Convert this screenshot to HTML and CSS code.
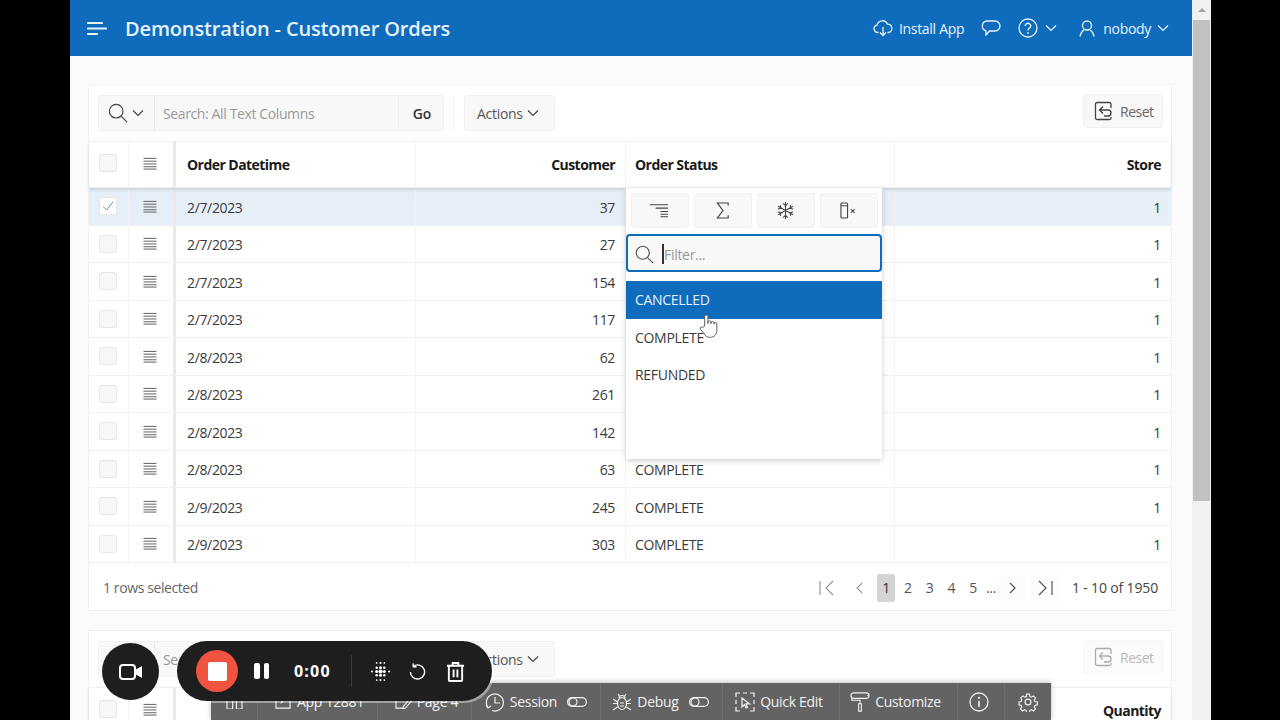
FILE: index.html
```html
<!DOCTYPE html>
<html lang="en">
<head>
<meta charset="utf-8">
<title>Demonstration - Customer Orders</title>
<link rel="stylesheet" href="styles.css">
</head>
<body>
<svg class="defs" width="0" height="0" aria-hidden="true">
  <symbol id="lines" viewBox="0 0 16 14"><path d="M1 1.500h14M1 4.500h14M1 7.500h14M1 10.500h14M1 13h14" fill="none" stroke="currentColor" stroke-width="1"/></symbol>
  <symbol id="chev" viewBox="0 0 12 8"><path d="M1 1.500l5 5 5-5" fill="none" stroke="currentColor" stroke-width="1.200"/></symbol>
  <symbol id="mag" viewBox="0 0 22 22"><circle cx="9" cy="9" r="7.500" fill="none" stroke="currentColor" stroke-width="1.300"/><path d="M14.500 14.500l6.500 6.500" fill="none" stroke="currentColor" stroke-width="1.300"/></symbol>
  <symbol id="reset" viewBox="0 0 20 20"><path d="M17 7V3a1.500 1.500 0 0 0-1.500-1.500H3A1.500 1.500 0 0 0 1.500 3v14A1.500 1.500 0 0 0 3 18.500h12.500A1.500 1.500 0 0 0 17 17v-1M9 5.500L5.500 9 9 12.500M5.500 9H14a3 3 0 0 1 0 6H10" fill="none" stroke="currentColor" stroke-width="1.300"/></symbol>
</svg>
<div class="app">
  <div class="page">
    <header class="topbar">
      <svg class="burger" viewBox="0 0 20 15"><path d="M1 2h14M1 7.500h18M1 13h9" fill="none" stroke="currentColor" stroke-width="2.200" stroke-linecap="round"/></svg>
      <h1 class="title">Demonstration - Customer Orders</h1>
      <div class="topnav">
        <svg class="ico-cloud" viewBox="0 0 20 18"><path d="M5.500 13.500H4.500a3.700 3.700 0 0 1-.5-7.300 5.500 5.500 0 0 1 10.500-1 4.200 4.200 0 0 1 1 8.300h-1M10 8v8.500M7 13.500l3 3 3-3" fill="none" stroke="currentColor" stroke-width="1.300"/></svg>
        <span class="nav-text install">Install App</span>
        <svg class="ico-chat" viewBox="0 0 20 16"><path d="M6 1h8a5 5 0 0 1 0 10H8.500L5 15v-4.200A5 5 0 0 1 6 1z" fill="none" stroke="currentColor" stroke-width="1.300"/></svg>
        <svg class="ico-help" viewBox="0 0 20 20"><circle cx="10" cy="10" r="9" fill="none" stroke="currentColor" stroke-width="1.300"/><path d="M7.300 8a2.700 2.700 0 1 1 4.200 2.200c-1 .7-1.500 1.100-1.500 2.300" fill="none" stroke="currentColor" stroke-width="1.400"/><circle cx="10" cy="15" r=".9" fill="currentColor"/></svg>
        <svg class="ico-chev help-chev"><use href="#chev"/></svg>
        <svg class="ico-user" viewBox="0 0 16 17"><circle cx="8" cy="5.500" r="4.500" fill="none" stroke="currentColor" stroke-width="1.300"/><path d="M1 16.500c.5-3 1.500-5 4-6.500M15 16.500c-.5-3-1.500-5-4-6.500" fill="none" stroke="currentColor" stroke-width="1.300"/></svg>
        <span class="nav-text user">nobody</span>
        <svg class="ico-chev"><use href="#chev"/></svg>
      </div>
    </header>

    <main class="content">
      <section class="card">
        <div class="toolbar">
          <div class="searchgroup">
            <div class="search-ico"><svg class="mag"><use href="#mag"/></svg><svg class="ico-chev dark"><use href="#chev"/></svg></div>
            <div class="search-input">Search: All Text Columns</div>
            <div class="go">Go</div>
          </div>
          <div class="tb-sep"></div>
          <div class="btn actions">Actions <svg class="ico-chev dark"><use href="#chev"/></svg></div>
          <div class="btn reset"><svg class="reset-ico"><use href="#reset"/></svg>Reset</div>
        </div>
        <div class="grid-wrap">
          <div class="grid-row head">
            <div class="c c-check"><span class="box"></span></div>
            <div class="c c-menu"><svg class="lines"><use href="#lines"/></svg></div>
            <div class="c c-date">Order Datetime</div>
            <div class="c num">Customer</div>
            <div class="c c-status">Order Status</div>
            <div class="c num">Store</div>
          </div>
          <div class="grid-row sel">
            <div class="c c-check"><span class="box checked"><svg viewBox="0 0 18 18"><path d="M3.500 9.500l4 4 7-9" fill="none" stroke="#4f7fa8" stroke-width="1"/></svg></span></div>
            <div class="c c-menu"><svg class="lines"><use href="#lines"/></svg></div>
            <div class="c c-date">2/7/2023</div><div class="c num">37</div><div class="c c-status"></div><div class="c num">1</div>
          </div>
          <div class="grid-row"><div class="c c-check"><span class="box"></span></div><div class="c c-menu"><svg class="lines"><use href="#lines"/></svg></div><div class="c c-date">2/7/2023</div><div class="c num">27</div><div class="c c-status"></div><div class="c num">1</div></div>
          <div class="grid-row"><div class="c c-check"><span class="box"></span></div><div class="c c-menu"><svg class="lines"><use href="#lines"/></svg></div><div class="c c-date">2/7/2023</div><div class="c num">154</div><div class="c c-status"></div><div class="c num">1</div></div>
          <div class="grid-row"><div class="c c-check"><span class="box"></span></div><div class="c c-menu"><svg class="lines"><use href="#lines"/></svg></div><div class="c c-date">2/7/2023</div><div class="c num">117</div><div class="c c-status"></div><div class="c num">1</div></div>
          <div class="grid-row"><div class="c c-check"><span class="box"></span></div><div class="c c-menu"><svg class="lines"><use href="#lines"/></svg></div><div class="c c-date">2/8/2023</div><div class="c num">62</div><div class="c c-status"></div><div class="c num">1</div></div>
          <div class="grid-row"><div class="c c-check"><span class="box"></span></div><div class="c c-menu"><svg class="lines"><use href="#lines"/></svg></div><div class="c c-date">2/8/2023</div><div class="c num">261</div><div class="c c-status"></div><div class="c num">1</div></div>
          <div class="grid-row"><div class="c c-check"><span class="box"></span></div><div class="c c-menu"><svg class="lines"><use href="#lines"/></svg></div><div class="c c-date">2/8/2023</div><div class="c num">142</div><div class="c c-status"></div><div class="c num">1</div></div>
          <div class="grid-row"><div class="c c-check"><span class="box"></span></div><div class="c c-menu"><svg class="lines"><use href="#lines"/></svg></div><div class="c c-date">2/8/2023</div><div class="c num">63</div><div class="c c-status">COMPLETE</div><div class="c num">1</div></div>
          <div class="grid-row"><div class="c c-check"><span class="box"></span></div><div class="c c-menu"><svg class="lines"><use href="#lines"/></svg></div><div class="c c-date">2/9/2023</div><div class="c num">245</div><div class="c c-status">COMPLETE</div><div class="c num">1</div></div>
          <div class="grid-row"><div class="c c-check"><span class="box"></span></div><div class="c c-menu"><svg class="lines"><use href="#lines"/></svg></div><div class="c c-date">2/9/2023</div><div class="c num">303</div><div class="c c-status">COMPLETE</div><div class="c num">1</div></div>

          <div class="colmenu">
            <div class="cm-btns">
              <div class="cm-btn"><svg viewBox="0 0 20 14" class="cm-ico"><path d="M0 1h19M6 4.500h13M11 8h8M11 11h8M11 13.500h8" fill="none" stroke="currentColor" stroke-width="1.100"/></svg></div>
              <div class="cm-btn"><svg viewBox="0 0 14 18" class="cm-ico"><path d="M13 4V1H1.500L7.500 9l-6 8H13v-3" fill="none" stroke="currentColor" stroke-width="1.200"/></svg></div>
              <div class="cm-btn"><svg viewBox="0 0 18 18" class="cm-ico"><path d="M9 0v18M1.200 4.500l15.600 9M1.200 13.500l15.600-9M6.500 1.500L9 4l2.500-2.500M6.500 16.500L9 14l2.500 2.500M1 7.500L4.300 6.700 3.500 3.300M17 10.500l-3.300.8.800 3.400M1 10.500l3.300.8-.8 3.400M17 7.500l-3.300-.8.800-3.400" fill="none" stroke="currentColor" stroke-width="1.100"/></svg></div>
              <div class="cm-btn"><svg viewBox="0 0 18 18" class="cm-ico"><rect x="1" y="1" width="7" height="16" rx="1" fill="none" stroke="currentColor" stroke-width="1.200"/><path d="M1 4h7M11.500 7.500l4 4M15.500 7.500l-4 4" fill="none" stroke="currentColor" stroke-width="1.100"/></svg></div>
            </div>
            <div class="cm-filter">
              <svg class="cm-mag"><use href="#mag"/></svg>
              <span class="caret"></span><span class="cm-ph">Filter...</span>
            </div>
            <ul class="cm-list">
              <li class="active">CANCELLED</li>
              <li>COMPLETE</li>
              <li>REFUNDED</li>
            </ul>
            <svg class="hand" viewBox="0 0 20 26"><path d="M6 13V3a1.700 1.700 0 0 1 3.400 0v7.500-1.300a1.600 1.600 0 0 1 3.200 0v1.300-.7a1.600 1.600 0 0 1 3.200 0v1.200-.2a1.500 1.500 0 0 1 3 0V17c0 5-3 8-7 8-3.500 0-5-1.500-6.500-4L1.500 16.500c-1-2 1.200-3.300 2.500-2z" fill="#fff" stroke="#555" stroke-width="1"/></svg>
          </div>
        </div>
        <div class="foot">
          <span class="selected">1 rows selected</span>
          <nav class="pager">
            <span class="pg-ico"><svg viewBox="0 0 16 16"><path d="M1 1v14M14 1L7 8l7 7" fill="none" stroke="currentColor" stroke-width="1.200"/></svg></span>
            <span class="pg-ico"><svg viewBox="0 0 16 16"><path d="M11 3L6 8l5 5" fill="none" stroke="currentColor" stroke-width="1.200"/></svg></span>
            <span class="pg cur">1</span><span class="pg">2</span><span class="pg">3</span><span class="pg">4</span><span class="pg">5</span><span class="pg dots">...</span>
            <span class="pg-ico dark"><svg viewBox="0 0 16 16"><path d="M5 3l5 5-5 5" fill="none" stroke="currentColor" stroke-width="1.200"/></svg></span>
            <span class="pg-ico dark"><svg viewBox="0 0 16 16"><path d="M2 1l7 7-7 7M15 1v14" fill="none" stroke="currentColor" stroke-width="1.200"/></svg></span>
            <span class="range">1 - 10 of 1950</span>
          </nav>
        </div>
      </section>

      <section class="card second">
        <div class="toolbar">
          <div class="searchgroup">
            <div class="search-ico"></div>
            <div class="search-input">Search: All Text Columns</div>
            <div class="go">Go</div>
          </div>
          <div class="tb-sep"></div>
          <div class="btn actions">Actions <svg class="ico-chev dark"><use href="#chev"/></svg></div>
          <div class="btn reset faded"><svg class="reset-ico"><use href="#reset"/></svg>Reset</div>
        </div>
        <div class="grid-row head">
          <div class="c c-check"><span class="box"></span></div>
          <div class="c c-menu"><svg class="lines"><use href="#lines"/></svg></div>
          <div class="c c-date"></div><div class="c"></div><div class="c"></div>
          <div class="c num">Quantity</div>
        </div>
      </section>
    </main>
  </div>
  <div class="scrollbar"><span class="sb-up"></span><span class="sb-thumb"></span></div>
</div>

<div class="devbar">
  <div class="dv dv-home"><svg viewBox="0 0 18 16" class="dv-ico"><path d="M1 16V2h6v14M11 16V2h6v14M1 16h6M11 16h6" fill="none" stroke="currentColor" stroke-width="1.200"/></svg></div>
  <div class="dv dv-app"><svg viewBox="0 0 18 16" class="dv-ico"><path d="M10 1H1v14h15V6M6 10l9-9" fill="none" stroke="currentColor" stroke-width="1.200"/></svg>App 12881</div>
  <div class="dv dv-page"><svg viewBox="0 0 18 16" class="dv-ico"><path d="M10 1H1v14h8M16 5l-7 8-1 3 3-1 7-8z" fill="none" stroke="currentColor" stroke-width="1.200"/></svg>Page 4</div>
  <div class="dv dv-session"><svg viewBox="0 0 20 20" class="dv-ico big"><path d="M3 15.500A8.500 8.500 0 1 1 7 18.500M10 5v6h5M1 13l2 3 3-2" fill="none" stroke="currentColor" stroke-width="1.200"/></svg>Session<svg viewBox="0 0 20 10" class="toggle"><rect x=".6" y=".6" width="18.800" height="8.800" rx="4.400" fill="none" stroke="currentColor" stroke-width="1.200"/><circle cx="6" cy="5" r="4" fill="none" stroke="currentColor" stroke-width="1.200"/></svg></div>
  <div class="dv dv-debug"><svg viewBox="0 0 20 20" class="dv-ico big"><ellipse cx="10" cy="11.500" rx="4.500" ry="6" fill="none" stroke="currentColor" stroke-width="1.200"/><path d="M7 6.500a3 3 0 0 1 6 0M6 2l2 3M14 2l-2 3M1 7l4.500 3M19 7l-4.500 3M1 11.500h4M19 11.500h-4M1 18l4.500-3M19 18l-4.500-3M8 11h4M8 14h4" fill="none" stroke="currentColor" stroke-width="1.100"/></svg>Debug<svg viewBox="0 0 20 10" class="toggle"><rect x=".6" y=".6" width="18.800" height="8.800" rx="4.400" fill="none" stroke="currentColor" stroke-width="1.200"/><circle cx="6" cy="5" r="4" fill="none" stroke="currentColor" stroke-width="1.200"/></svg></div>
  <div class="dv dv-quick"><svg viewBox="0 0 20 20" class="dv-ico big"><path d="M1 5V1h4M8 1h4M15 1h4v4M19 8v4M19 15v4h-4M5 19H1v-4M1 8v4M7 6v9l2.500-2.500 1.500 3.500 1.500-.6-1.500-3.500h3.500z" fill="none" stroke="currentColor" stroke-width="1.200"/></svg>Quick Edit</div>
  <div class="dv dv-custom"><svg viewBox="0 0 20 22" class="dv-ico big"><path d="M3 1h14a2 2 0 0 1 0 6H3a2 2 0 0 1 0-6zM19 4h-1M1 5v4h9v4M8.500 13h3v8h-3z" fill="none" stroke="currentColor" stroke-width="1.200"/></svg>Customize</div>
  <div class="dv dv-info"><svg viewBox="0 0 20 20" class="dv-ico big"><circle cx="10" cy="10" r="9" fill="none" stroke="currentColor" stroke-width="1.300"/><path d="M10 9v6" stroke="currentColor" stroke-width="1.600"/><circle cx="10" cy="5.800" r="1.100" fill="currentColor"/></svg></div>
  <div class="dv dv-gear"><svg viewBox="0 0 24 24" class="dv-ico big"><circle cx="12" cy="12" r="3.500" fill="none" stroke="currentColor" stroke-width="1.400"/><path d="M10 1.500h4l.6 3.200 2 .9 2.700-1.800 2.800 2.800-1.800 2.700.9 2 3.200.6v4l-3.200.6-.9 2 1.800 2.700-2.800 2.800-2.700-1.800-2 .9-.6 2.900h-4l-.6-2.900-2-.9-2.700 1.800-2.800-2.800 1.800-2.700-.9-2-2.800-.6v-4l2.800-.6.9-2L2.400 6.600l2.800-2.800 2.700 1.800 2-.9z" transform="translate(1.200 1.200) scale(.9)" fill="none" stroke="currentColor" stroke-width="1.500"/></svg></div>
</div>

<div class="rec-cam"><svg viewBox="0 0 24 16"><rect x="1" y="1" width="15" height="14" rx="3" fill="none" stroke="currentColor" stroke-width="2"/><path d="M16 6l7-4v12l-7-4z" fill="currentColor"/></svg></div>
<div class="rec-pill">
  <span class="stop"><span class="stop-sq"></span></span>
  <span class="pause"><i></i><i></i></span>
  <span class="time">0:00</span>
  <span class="rec-sep"></span>
  <svg class="rec-dots" viewBox="0 0 22 22"><g fill="#fff"><circle cx="11" cy="11" r="2.200"/><circle cx="7" cy="11" r="1.600"/><circle cx="15" cy="11" r="1.600"/><circle cx="11" cy="7" r="1.600"/><circle cx="11" cy="15" r="1.600"/><circle cx="7" cy="7" r="1.300"/><circle cx="15" cy="7" r="1.300"/><circle cx="7" cy="15" r="1.300"/><circle cx="15" cy="15" r="1.300"/><circle cx="2" cy="11" r="1.100"/><circle cx="20" cy="11" r="1.100"/><circle cx="11" cy="2" r="1.100"/><circle cx="11" cy="20" r="1.100"/><circle cx="7" cy="2" r=".9"/><circle cx="15" cy="2" r=".9"/><circle cx="7" cy="20" r=".9"/><circle cx="15" cy="20" r=".9"/></g></svg>
  <svg class="rec-undo" viewBox="0 0 18 18"><path d="M4.500 3.500A7.500 7.500 0 1 1 1.500 9.500M4.500 .5v3.500h3.500" fill="none" stroke="#fff" stroke-width="1.500"/></svg>
  <svg class="rec-trash" viewBox="0 0 20 22"><path d="M1 5h18M7 5V2h6v3M3 5v15a1 1 0 0 0 1 1h12a1 1 0 0 0 1-1V5M8 9v8M12 9v8" fill="none" stroke="#fff" stroke-width="2"/></svg>
</div>
</body>
</html>
```
FILE: styles.css
```css
* { box-sizing: border-box; }
html, body { margin: 0; height: 720px; overflow: hidden; background: #000; }
body { font-family: "Open Sans", "Noto Sans", sans-serif; font-size: 14px; color: #3a3a3a; position: relative; }
.defs { position: absolute; }
.app { display: flex; width: 1141px; height: 720px; margin-left: 70px; }
.page { width: 1122px; flex: none; background: #fbfbfb; overflow: hidden; }
.scrollbar { width: 19px; background: #f1f1f1; display: flex; flex-direction: column; align-items: center; padding-top: 8px; }
.sb-up { width: 0; height: 0; border-left: 4px solid transparent; border-right: 4px solid transparent; border-bottom: 4px solid #a6a6a6; margin-bottom: 8px; }
.sb-thumb { width: 17px; height: 481px; background: #c1c1c1; }

.topbar { height: 56px; background: #0f6cbd; color: #e9f3fb; display: flex; align-items: center; padding: 0 23px 0 17px; }
.burger { width: 20px; height: 15px; margin-right: 18px; }
.title { margin: 0; font-size: 20px; font-weight: 600; letter-spacing: -.15px; color: #e6f2fb; }
.topnav { margin-left: auto; display: flex; align-items: center; }
.ico-cloud { width: 20px; height: 18px; margin-right: 6px; }
.nav-text { font-size: 14px; letter-spacing: -.3px; }
.install { margin-right: 17px; }
.ico-chat { width: 20px; height: 16px; margin-right: 17px; }
.ico-help { width: 20px; height: 20px; margin-right: 7px; }
.ico-chev { width: 12px; height: 8px; color: inherit; }
.ico-chev.dark { color: #444; }
.help-chev { margin-right: 22px; }
.ico-user { width: 16px; height: 17px; margin-right: 8px; }
.user { margin-right: 6px; }

.content { padding: 28px 20px 0 18px; display: flex; flex-direction: column; gap: 19px; }
.card { background: #fff; border: 1px solid #f1f1f1; flex: none; }
.toolbar { height: 56px; display: flex; align-items: center; padding: 0 8px 0 9px; }
.searchgroup { width: 346px; height: 36px; display: flex; background: #f8f8f8; border: 1px solid #f0f0f0; border-radius: 3px; }
.search-ico { width: 56px; display: flex; align-items: center; padding-left: 9px; gap: 4px; border-right: 1px solid #e8e8e8; }
.mag { width: 20px; height: 20px; color: #444; }
.search-input { flex: 1; padding-left: 8px; line-height: 36px; color: #9a9a9a; letter-spacing: -.38px; white-space: nowrap; }
.go { width: 45px; text-align: center; line-height: 36px; font-weight: 600; color: #333; border-left: 1px solid #f0f0f0; padding-left: 2px; }
.tb-sep { width: 1px; height: 36px; background: #f4f4f4; margin: 0 10px 0 9px; }
.btn { height: 36px; display: flex; align-items: center; background: #f8f8f8; border: 1px solid #f0f0f0; border-radius: 3px; color: #555; letter-spacing: -.3px; }
.actions { width: 91px; padding-left: 12px; gap: 4px; }
.reset { width: 80px; height: 34px; margin-left: auto; padding-left: 10px; margin-top: -4px; color: #666; letter-spacing: -.5px; }
.reset-ico { width: 20px; height: 20px; margin-right: 6px; color: #444; }
.faded { opacity: .45; }

.grid-wrap { position: relative; }
.grid-row { display: grid; grid-template-columns: 40px 47px 240px 210px 269px 1fr; height: 37.500px; border-bottom: 1px solid #f0f0f0; }
.grid-row:last-of-type { border-bottom: 1px solid #e8e8e8; }
.grid-row.head { height: 47px; border-top: 1px solid #f0f0f0; font-weight: 700; color: #1a1a1a; box-shadow: 0 2px 3px rgba(0,0,0,.12); position: relative; }
.grid-row.sel { background: #e6eff8; }
.c { display: flex; align-items: center; padding: 2px 10px 0; border-right: 1px solid #f3f3f3; letter-spacing: -.35px; white-space: nowrap; }
.c:last-child { border-right: 0; }
.head .c { padding-top: 0; letter-spacing: -.55px; }
.num { justify-content: flex-end; }
.c-check { justify-content: center; padding: 0 2px 0 0; }
.c-menu { justify-content: center; padding: 0 2px 0 0; border-right: 3px solid #e9e9e9; color: #555; }
.head .c-check, .head .c-menu { padding-bottom: 3px; }
.c-date { padding-left: 11px; }
.head .c-date { padding-left: 11px; }
.c-status { padding-left: 9px; }
.box { width: 18px; height: 18px; background: #f7f7f7; border: 1px solid #e6e6e6; border-radius: 3px; display: block; }
.box.checked { background: #fff; }
.box svg { display: block; width: 16px; height: 16px; }
.lines { width: 16px; height: 13px; color: #555; }

.colmenu { position: absolute; left: 537px; top: 47px; width: 256px; height: 271px; background: #fff; box-shadow: 0 2px 6px rgba(0,0,0,.18); }
.cm-btns { display: grid; grid-template-columns: repeat(4, 57.500px); gap: 5.500px; padding: 5px 5px 0; }
.cm-btn { height: 35px; background: #f8f8f8; border: 1px solid #f1f1f1; border-radius: 3px; display: flex; align-items: center; justify-content: center; color: #444; }
.cm-ico { width: 19px; height: 17px; }
.cm-filter { height: 38px; margin: 6px 0 9px; background: #f8f8f8; border: 2px solid #0f6cbd; border-radius: 4px; display: flex; align-items: center; padding: 2px 0 0 7px; }
.cm-mag { width: 19px; height: 19px; color: #555; margin-right: 8px; }
.caret { width: 2px; height: 20px; background: #333; }
.cm-ph { color: #9a9a9a; letter-spacing: -.3px; }
.cm-list { list-style: none; margin: 0; padding: 0; }
.cm-list li { height: 37.500px; line-height: 37px; padding-left: 9px; letter-spacing: -.3px; }
.cm-list li.active { background: #0f6cbd; color: #e6f2fb; }
.hand { position: absolute; left: 73px; top: 125px; width: 19px; height: 26px; }

.foot { height: 47px; display: flex; align-items: center; justify-content: space-between; padding: 2px 13px 0 14px; }
.selected { color: #666; letter-spacing: -.4px; }
.pager { display: flex; align-items: center; color: #555; letter-spacing: -.3px; }
.pg-ico { width: 28px; height: 28px; display: flex; align-items: center; justify-content: center; color: #999; margin-right: 4px; }
.pg-ico svg { width: 16px; height: 16px; }
.pg-ico.dark { color: #555; background: #fcfcfc; }
.pg { width: 18px; height: 28px; line-height: 28px; text-align: center; margin-right: 3.750px; }
.pg.cur { background: #d4d4d4; border-radius: 2px; color: #333; }
.pg.dots { width: 8px; margin-right: 5px; }
.range { margin-left: 9px; color: #444; letter-spacing: -.15px; }

.devbar { position: absolute; left: 211px; top: 683px; width: 840px; height: 37px; background: #636363; color: #f2f2f2; display: flex; box-shadow: 0 -1px 5px rgba(0,0,0,.25); }
.dv { display: flex; align-items: center; justify-content: center; gap: 5px; border-right: 1px solid #6e6e6e; letter-spacing: -.3px; white-space: nowrap; }
.dv:last-child { border-right: 0; }
.dv-home { width: 47px; }
.dv-app { width: 120px; padding-left: 4px; }
.dv-page { width: 94px; padding-left: 4px; }
.dv-session { width: 129px; }
.dv-debug { width: 122px; padding-right: 2px; }
.dv-quick { width: 117px; padding-right: 4px; }
.dv-custom { width: 118px; padding-right: 6px; }
.dv-info { width: 47px; padding-right: 4px; }
.dv-gear { flex: 1; }
.dv-ico { width: 17px; height: 15px; }
.dv-ico.big { width: 20px; height: 20px; }
.toggle { width: 20px; height: 10px; margin-left: 5px; }

.rec-cam { position: absolute; left: 102px; top: 643px; width: 57px; height: 57px; border-radius: 50%; background: #1e1e1e; color: #fff; display: flex; align-items: center; justify-content: center; }
.rec-cam svg { width: 24px; height: 16px; }
.rec-pill { position: absolute; left: 177px; top: 641px; width: 315px; height: 60px; border-radius: 30px; background: #1e1e1e; box-shadow: 2px 2px 0 rgba(255,255,255,.4); display: flex; align-items: center; padding-left: 19px; color: #fff; }
.stop { width: 42px; height: 42px; border-radius: 50%; background: #f0533e; display: flex; align-items: center; justify-content: center; margin-right: 16px; }
.stop-sq { width: 19px; height: 19px; background: #fff; border-radius: 2px; }
.pause { display: flex; gap: 4px; width: 15px; margin-right: 25px; }
.pause i { display: block; width: 5.500px; height: 16px; background: #fff; border-radius: 2px; }
.time { font-weight: 700; font-size: 16px; letter-spacing: 1.200px; width: 38px; margin-right: 19px; white-space: nowrap; }
.rec-sep { width: 1px; height: 32px; background: #3c3c3c; margin-right: 18px; }
.rec-dots { width: 21px; height: 21px; margin-right: 18px; }
.rec-undo { width: 17px; height: 17px; margin-right: 20px; }
.rec-trash { width: 19px; height: 21px; }
```
